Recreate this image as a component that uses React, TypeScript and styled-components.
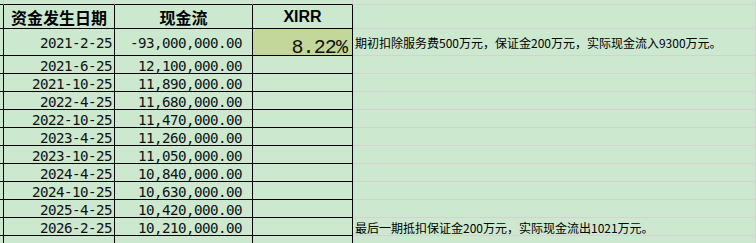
import React from 'react';
import styled, { createGlobalStyle, css } from 'styled-components';

const INK = '#000000';
const GRID = '#d6d0d6';
const SHEET_BG = '#cce8cf';

const GlobalStyle = createGlobalStyle`
  html, body {
    margin: 0;
    padding: 0;
    background: ${SHEET_BG};
    overflow: hidden;
  }
  body {
    font-family: "Noto Sans CJK SC", "Liberation Sans", sans-serif;
    color: #000;
  }
`;

const Sheet = styled.div`
  display: grid;
  grid-template-columns: 4px 111px 138px 100px 403px;
  grid-template-rows: 5px 24px 27px repeat(11, 18px);
  width: 756px;
  background: ${SHEET_BG};
`;

const cellBox = css`
  box-sizing: border-box;
  display: flex;
  align-items: center;
  min-width: 0;
  white-space: nowrap;
`;

// strip of the row above the table, only its lower edge shows
const StripCell = styled.div<{ $frame?: boolean }>`
  ${cellBox};
  border-right: 1px solid ${GRID};
  border-bottom: 1px solid ${(p) => (p.$frame ? INK : GRID)};
`;

const Cell = styled.div<{ $frame?: boolean }>`
  ${cellBox};
  border-right: 1px solid ${(p) => (p.$frame ? INK : GRID)};
  border-bottom: 1px solid ${(p) => (p.$frame ? INK : GRID)};
`;

const HeaderCell = styled(Cell)`
  justify-content: center;
  font-weight: 700;
  font-size: 16px;
  line-height: 20px;
`;

const LatinHeader = styled(HeaderCell)`
  font-family: "Liberation Sans", Arial, sans-serif;
  font-size: 16px;
  padding-top: 1px;
`;

const numberText = css`
  justify-content: flex-end;
  font-family: "DejaVu Sans Mono", "Liberation Mono", monospace;
  font-size: 14.2px;
  letter-spacing: -0.55px;
  line-height: 17px;
  padding-top: 3px;
  color: #111;
`;

const DateCell = styled(Cell)`
  ${numberText};
  padding-right: 2px;
`;

const AmountCell = styled(Cell)`
  ${numberText};
  padding-right: 10px;
`;

const RateCell = styled(Cell)<{ $fill?: boolean }>`
  justify-content: flex-end;
  align-items: flex-end;
  background: ${(p) => (p.$fill ? '#c4d79b' : 'transparent')};
  font-family: "Liberation Mono", "Courier New", monospace;
  font-size: 20px;
  letter-spacing: -0.9px;
  line-height: 14px;
  color: #111;
  padding-right: 5px;
`;

const NoteCell = styled(Cell)`
  padding-left: 2px;
  padding-top: 2px;
  font-size: 12px;
  line-height: 16px;
`;

type Flow = {
  date: string;
  amount: string;
  rate?: string;
  note?: string;
};

const flows: Flow[] = [
  {
    date: '2021-2-25',
    amount: '-93,000,000.00',
    rate: '8.22%',
    note: '期初扣除服务费500万元，保证金200万元，实际现金流入9300万元。',
  },
  { date: '2021-6-25', amount: '12,100,000.00' },
  { date: '2021-10-25', amount: '11,890,000.00' },
  { date: '2022-4-25', amount: '11,680,000.00' },
  { date: '2022-10-25', amount: '11,470,000.00' },
  { date: '2023-4-25', amount: '11,260,000.00' },
  { date: '2023-10-25', amount: '11,050,000.00' },
  { date: '2024-4-25', amount: '10,840,000.00' },
  { date: '2024-10-25', amount: '10,630,000.00' },
  { date: '2025-4-25', amount: '10,420,000.00' },
  {
    date: '2026-2-25',
    amount: '10,210,000.00',
    note: '最后一期抵扣保证金200万元，实际现金流出1021万元。',
  },
  { date: '', amount: '' },
];

const App = () => {
  return (
    <>
      <GlobalStyle />
      <Sheet>
        <StripCell $frame />
        <StripCell $frame />
        <StripCell $frame />
        <StripCell $frame />
        <StripCell />

        <Cell $frame />
        <HeaderCell $frame>资金发生日期</HeaderCell>
        <HeaderCell $frame>现金流</HeaderCell>
        <LatinHeader $frame>XIRR</LatinHeader>
        <Cell />

        {flows.map((f, i) => (
          <React.Fragment key={i}>
            <Cell $frame />
            <DateCell $frame>{f.date}</DateCell>
            <AmountCell $frame>{f.amount}</AmountCell>
            <RateCell $frame $fill={!!f.rate}>
              {f.rate}
            </RateCell>
            <NoteCell>{f.note}</NoteCell>
          </React.Fragment>
        ))}
      </Sheet>
    </>
  );
};

export default App;
